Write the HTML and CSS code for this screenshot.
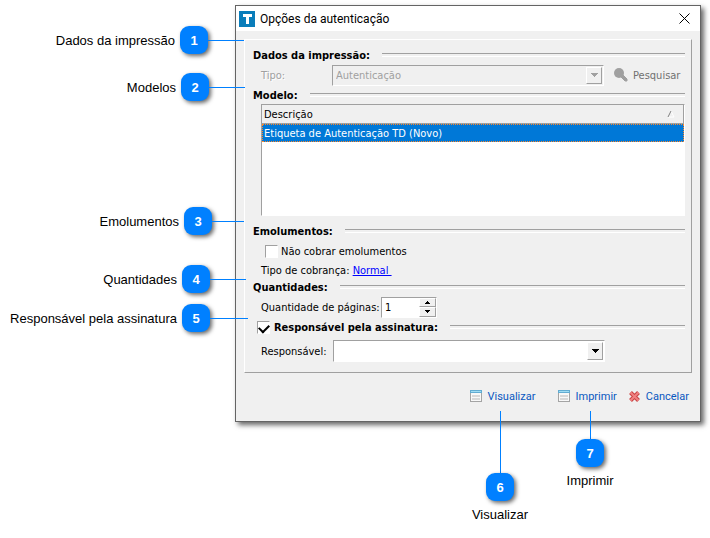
FILE: index.html
```html
<!DOCTYPE html>
<html lang="pt-BR">
<head>
    <meta charset="UTF-8">
    <meta name="viewport" content="width=device-width, initial-scale=1.0">
    <title>Opções da autenticação</title>
    <link rel="stylesheet" href="styles.css">
</head>
<body>
    <div class="page">
        <!-- Dialog -->
        <form class="dialog">
            <header class="title-bar">
                <svg class="app-icon" width="16" height="16" viewBox="0 0 16 16" aria-hidden="true">
                    <rect width="16" height="16" fill="#0a7dba"/>
                    <path d="M4 3h9v3h-3v7H7V6H4z" fill="#ffffff"/>
                </svg>
                <h1>Opções da autenticação</h1>
                <button type="button" class="close-button" aria-label="Fechar">
                    <svg width="11" height="11" viewBox="0 0 11 11"><path d="M.5 .5l10 10M10.5 .5l-10 10" stroke="#000000"/></svg>
                </button>
            </header>

            <div class="dialog-body">
                <div class="group">
                    <h2 class="section-title">Dados da impressão:</h2>
                    <div class="field-row">
                        <label class="disabled-text tipo-label" for="tipo">Tipo:</label>
                        <div class="combo combo-disabled">
                            <select id="tipo" disabled><option>Autenticação</option></select>
                            <span class="combo-arrow"><svg width="7" height="4" viewBox="0 0 7 4" shape-rendering="crispEdges"><path d="M0 0h7L4 4H3z"/></svg></span>
                        </div>
                        <button type="button" class="tool-button search-button">
                            <svg width="14" height="14" viewBox="0 0 14 14" fill="#a0a0a0">
                                <circle cx="5" cy="5" r="5"/>
                                <path d="M7 9l2-2 4 4v2h-2z" stroke="#a0a0a0" stroke-linejoin="round"/>
                            </svg>
                            Pesquisar
                        </button>
                    </div>

                    <h2 class="section-title">Modelo:</h2>
                    <div class="list">
                        <table>
                            <thead>
                                <tr><th><div class="list-header">Descrição
                                    <svg width="8" height="8" viewBox="0 0 8 8" fill="none"><path d="M4 1l3 6H1" stroke="#ffffff"/><path d="M1 7l3-6" stroke="#808080"/></svg>
                                </div></th></tr>
                            </thead>
                            <tbody>
                                <tr class="selected"><td>Etiqueta de Autenticação TD (Novo)</td></tr>
                            </tbody>
                        </table>
                    </div>

                    <h2 class="section-title">Emolumentos:</h2>
                    <div class="check-row">
                        <input type="checkbox" id="nao-cobrar">
                        <label for="nao-cobrar">Não cobrar emolumentos</label>
                    </div>
                    <div class="charge-row">Tipo de cobrança: <a href="#">Normal&nbsp;</a></div>

                    <h2 class="section-title">Quantidades:</h2>
                    <div class="field-row">
                        <label class="quantity-label" for="paginas">Quantidade de páginas:</label>
                        <div class="spinner">
                            <input type="number" id="paginas" value="1" min="1">
                            <div class="spinner-buttons">
                                <button type="button" aria-label="Aumentar"><svg width="5" height="3" viewBox="0 0 5 3" shape-rendering="crispEdges"><path d="M0 3h5L3 0H2z"/></svg></button>
                                <button type="button" aria-label="Diminuir"><svg width="5" height="3" viewBox="0 0 5 3" shape-rendering="crispEdges"><path d="M0 0h5L3 3H2z"/></svg></button>
                            </div>
                        </div>
                    </div>

                    <h2 class="section-title section-check">
                        <input type="checkbox" id="assinatura" checked>
                        <label for="assinatura">Responsável pela assinatura:</label>
                    </h2>
                    <div class="field-row signer-row">
                        <label class="signer-label" for="responsavel">Responsável:</label>
                        <div class="combo">
                            <select id="responsavel"><option></option></select>
                            <span class="combo-arrow"><svg width="7" height="4" viewBox="0 0 7 4" shape-rendering="crispEdges"><path d="M0 0h7L4 4H3z"/></svg></span>
                        </div>
                    </div>
                </div>

                <footer class="actions">
                    <button type="button" class="tool-button wide">
                        <svg width="12" height="12" viewBox="0 0 12 12">
                            <rect x=".5" y=".5" width="11" height="11" fill="#f8f8f8" stroke="#a4a4a4"/>
                            <path d="M0 0h12v3H0z" fill="#62acd2"/>
                            <path d="M1 1.5h10" stroke="#9fdcf2"/>
                            <path d="M2 5h8v2H2zM2 8h8v2H2z" fill="#d8d8d8"/>
                        </svg>
                        Visualizar
                    </button>
                    <button type="button" class="tool-button">
                        <svg width="12" height="12" viewBox="0 0 12 12">
                            <rect x=".5" y=".5" width="11" height="11" fill="#f8f8f8" stroke="#a4a4a4"/>
                            <path d="M0 0h12v3H0z" fill="#62acd2"/>
                            <path d="M1 1.5h10" stroke="#9fdcf2"/>
                            <path d="M2 5h8v2H2zM2 8h8v2H2z" fill="#d8d8d8"/>
                        </svg>
                        Imprimir
                    </button>
                    <button type="button" class="tool-button">
                        <svg width="11" height="11" viewBox="0 0 11 11">
                            <path d="M1.5 1.5l8 8M9.5 1.5l-8 8" stroke="#c84444" stroke-width="4"/>
                            <path d="M1.5 1.5l8 8M9.5 1.5l-8 8" stroke="#f08080" stroke-width="2"/>
                        </svg>
                        Cancelar
                    </button>
                </footer>
            </div>
        </form>

        <!-- Numbered callouts over the dialog -->
        <div class="callout side callout-1"><span>Dados da impressão</span><b>1</b><i></i></div>
        <div class="callout side callout-2"><span>Modelos</span><b>2</b><i></i></div>
        <div class="callout side callout-3"><span>Emolumentos</span><b>3</b><i></i></div>
        <div class="callout side callout-4"><span>Quantidades</span><b>4</b><i></i></div>
        <div class="callout side callout-5"><span>Responsável pela assinatura</span><b>5</b><i></i></div>
        <div class="callout below callout-6"><i></i><b>6</b><span>Visualizar</span></div>
        <div class="callout below callout-7"><i></i><b>7</b><span>Imprimir</span></div>
    </div>
</body>
</html>
```
FILE: styles.css
```css
* {
    box-sizing: border-box;
}
body {
    margin: 0;
    background: #ffffff;
    color: #000000;
    font-family: "DejaVu Sans Condensed", "DejaVu Sans", sans-serif;
    font-size: 11px;
}
.page {
    position: relative;
    min-height: 100vh;
    padding: 5px 9px 0 235px;
}
button, input, select {
    font: inherit;
    color: inherit;
    margin: 0;
    padding: 0;
    border: none;
    border-radius: 0;
}
svg {
    display: block;
    flex: none;
}

/* Dialog */
.dialog {
    border: 1px solid #646464;
    background: #f0f0f0;
    box-shadow: 3px 3px 5px rgba(0, 0, 0, 0.6);
}
.title-bar {
    display: flex;
    align-items: center;
    gap: 5px;
    height: 25px;
    padding: 0 10px 0 3px;
    background: #ffffff;
}
.title-bar h1 {
    flex: 1;
    margin: 0;
    font-family: Roboto, sans-serif;
    font-size: 12px;
    font-weight: normal;
}
.close-button {
    background: none;
}
.dialog-body {
    padding: 8px 8px 0;
}
.group {
    padding: 7px 6px 9px 8px;
    border: 1px solid #a0a0a0;
    border-top-color: #ffffff;
    border-left-color: #ffffff;
}
.section-title {
    display: flex;
    align-items: center;
    gap: 12px;
    height: 16px;
    margin: 0;
    font-size: 11px;
    font-weight: bold;
}
.section-title::after {
    content: "";
    flex: 1;
    height: 2px;
    border-top: 1px solid #a0a0a0;
    border-bottom: 1px solid #ffffff;
}
.section-check {
    padding-left: 4px;
}
.section-check input {
    margin-right: -8px;
}
.field-row {
    display: flex;
    align-items: center;
    height: 24px;
    padding-left: 8px;
}
.disabled-text {
    color: #a0a0a0;
    text-shadow: 1px 1px #ffffff;
}
.tipo-label {
    width: 71px;
}
.quantity-label {
    width: 120px;
}
.signer-label {
    width: 72px;
}
.signer-row {
    margin-top: 4px;
}

/* Combo box */
.combo {
    display: grid;
    flex: 0 1 272px;
    height: 22px;
    border: 1px solid #a0a0a0;
    border-right-color: #ffffff;
    border-bottom-color: #ffffff;
    background: #ffffff;
}
.combo select, .combo-arrow {
    grid-area: 1 / 1;
}
.combo select {
    width: 100%;
    padding-left: 3px;
    appearance: none;
    background: none;
    opacity: 1;
}
.combo-arrow {
    display: flex;
    align-items: center;
    justify-content: center;
    justify-self: end;
    width: 16px;
    margin: 1px;
    border: 1px solid #ffffff;
    border-right-color: #a0a0a0;
    border-bottom-color: #a0a0a0;
    background: #f0f0f0;
    pointer-events: none;
}
.combo-disabled {
    height: 21px;
    background: #f0f0f0;
    color: #a0a0a0;
    fill: #a0a0a0;
}
.tool-button {
    display: flex;
    align-items: center;
    gap: 6px;
    background: none;
    color: #0a58c0;
}
.search-button {
    gap: 5px;
    margin-left: 10px;
    color: #707070;
}

/* Model list */
.list {
    height: 112px;
    margin: 1px 0 7px 8px;
    border: 1px solid #a0a0a0;
    border-right-color: #ffffff;
    border-bottom-color: #ffffff;
    background: #ffffff;
}
.list table {
    width: 100%;
    border-collapse: separate;
    border-spacing: 0;
}
.list th {
    padding: 0;
    font-weight: normal;
    text-align: left;
}
.list-header {
    display: flex;
    align-items: center;
    justify-content: space-between;
    height: 19px;
    padding: 0 8px 0 2px;
    border: 1px solid #a0a0a0;
    border-width: 0 1px 1px 0;
    background: #f0f0f0;
}
.list td {
    height: 18px;
    padding: 0 1px;
}
.list .selected td {
    border: 1px dotted #ff8728;
    background: #0078d7;
    color: #ffffff;
}

/* Check boxes */
input[type="checkbox"] {
    width: 13px;
    height: 13px;
    appearance: none;
    border: 1px solid #a0a0a0;
    border-right-color: #ffffff;
    border-bottom-color: #ffffff;
    background: #ffffff;
}
input[type="checkbox"]:checked::after {
    content: "";
    display: block;
    width: 8px;
    height: 5px;
    margin: 2px 1px;
    border: solid #000000;
    border-width: 0 0 2px 2px;
    transform: rotate(-45deg);
}
.check-row {
    display: flex;
    align-items: center;
    gap: 3px;
    height: 24px;
    padding-left: 12px;
}
.charge-row {
    height: 16px;
    padding-left: 8px;
    line-height: 16px;
}
.charge-row a {
    color: #0000ff;
}

/* Page counter */
.spinner {
    display: flex;
    width: 56px;
    height: 21px;
    border: 1px solid #a0a0a0;
    border-right-color: #ffffff;
    border-bottom-color: #ffffff;
    background: #ffffff;
}
.spinner input {
    flex: 1;
    min-width: 0;
    padding-left: 3px;
    appearance: textfield;
    background: none;
}
.spinner-buttons {
    display: flex;
    flex-direction: column;
    width: 17px;
}
.spinner-buttons button {
    display: flex;
    flex: 1;
    align-items: center;
    justify-content: center;
    border: 1px solid #ffffff;
    border-right-color: #a0a0a0;
    border-bottom-color: #a0a0a0;
    background: #f0f0f0;
}

.actions {
    display: flex;
    align-items: center;
    justify-content: flex-end;
    gap: 12px;
    height: 46px;
    margin-bottom: 2px;
    padding-right: 3px;
    font-family: Roboto, sans-serif;
}
.wide {
    min-width: 76px;
}

/* Callouts */
.callout {
    position: absolute;
    display: flex;
    align-items: center;
    font-family: "Liberation Sans", Arial, sans-serif;
    font-size: 13px;
    white-space: nowrap;
}
.callout b {
    display: flex;
    align-items: center;
    justify-content: center;
    width: 28px;
    height: 28px;
    border-radius: 9px;
    background: #0080ff;
    box-shadow: 2px 2px 4px rgba(0, 0, 0, 0.6);
    color: #ffffff;
}
.callout i {
    background: #0080ff;
}
.side {
    left: 0;
    justify-content: flex-end;
}
.side span {
    margin-right: 5px;
}
.side i {
    flex: none;
    width: 36px;
    height: 1px;
}
.below {
    flex-direction: column;
    width: 80px;
}
.below i {
    width: 1px;
    height: 28px;
}
.below span {
    margin-top: 6px;
}
.callout-1 {
    top: 26px;
    width: 244px;
}
.callout-2 {
    top: 73px;
    width: 245px;
}
.callout-3 {
    top: 207px;
    width: 244px;
}
.callout-3 i {
    width: 32px;
}
.callout-4 {
    top: 265px;
    width: 246px;
}
.callout-5 {
    top: 304px;
    width: 248px;
}
.callout-5 i {
    width: 38px;
}
.callout-6 {
    top: 411px;
    left: 460px;
}
.callout-6 i {
    height: 62px;
}
.callout-7 {
    top: 411px;
    left: 550px;
}
```
